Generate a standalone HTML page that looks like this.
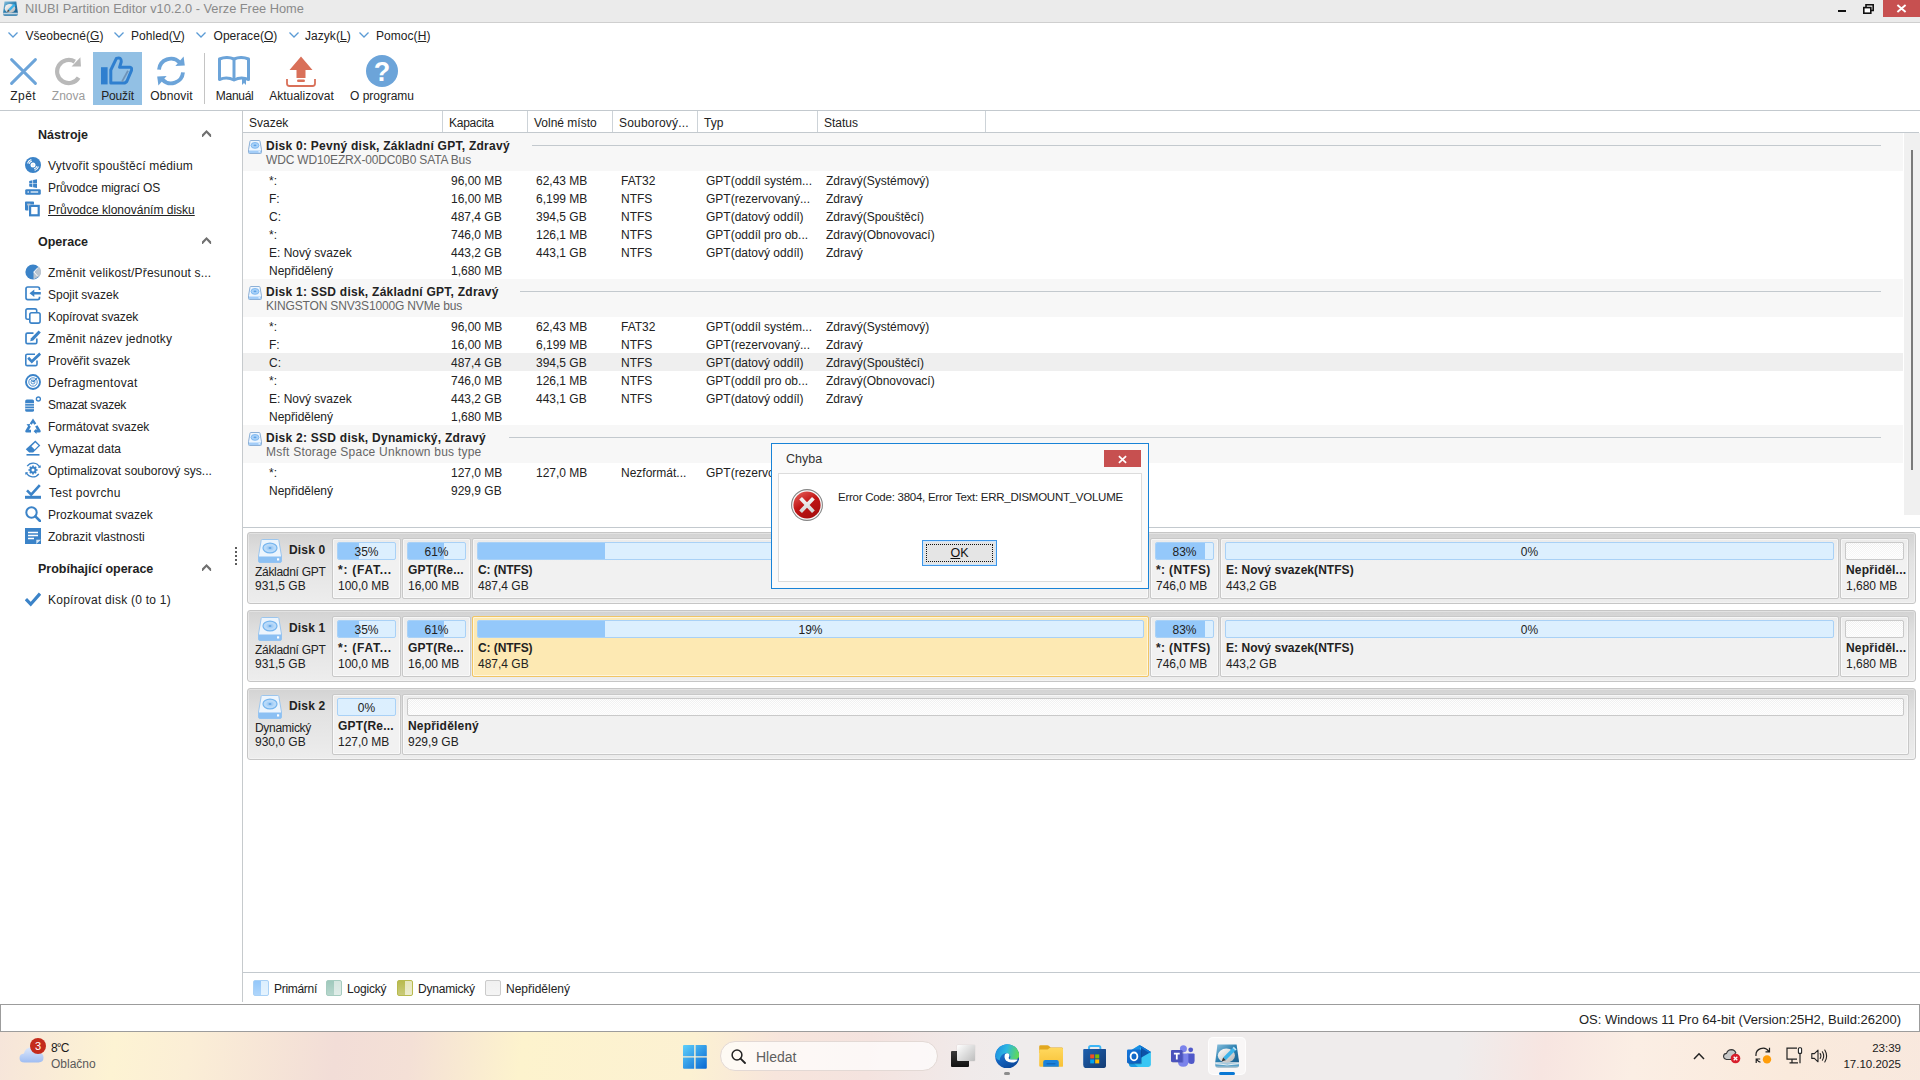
<!DOCTYPE html>
<html lang="cs"><head><meta charset="utf-8"><title>NIUBI Partition Editor v10.2.0 - Verze Free Home</title>
<style>
html,body{margin:0;padding:0}
body{width:1920px;height:1080px;overflow:hidden;position:relative;background:#fff;
 font-family:"Liberation Sans",sans-serif;font-size:12px;color:#222}
.t{position:absolute;white-space:nowrap;line-height:16px;height:16px}
.b{font-weight:bold;letter-spacing:.26px}
.g{color:#666}
.c{text-align:center}
.u{text-decoration:underline}
.hl{position:absolute;height:1px;background:#c3c9ce}
.cell{position:absolute;height:61px;top:0;background:linear-gradient(#ebebeb,#f1f1f1 40%);border:1px solid #c8c8c8;box-sizing:border-box;border-radius:2px;box-shadow:inset 0 0 0 1px rgba(255,255,255,.55)}
.bar{position:absolute;left:4px;right:4px;top:3px;height:18px;box-sizing:border-box;border:1px solid #a9d1f6;background:#dceffe;border-radius:2px;overflow:hidden}
.bar i{position:absolute;left:0;top:0;bottom:0;background:#94c8fa}
.bar.un{border-color:#c9c9c9;background:repeating-conic-gradient(rgba(255,255,255,.9) 0 25%,rgba(255,255,255,0) 0 50%) 0 0/2px 2px,linear-gradient(#efefef,#f8f8f8)}
.dk{position:absolute;left:247px;width:1669px;height:72px;box-sizing:border-box;border:1px solid #c6c6c6;border-radius:3px;
 background:linear-gradient(#d3d3d3,#e2e2e2 35%,#ededed);box-shadow:inset 0 0 0 1px rgba(255,255,255,.35)}
</style></head><body>

<div style="position:absolute;left:0px;top:0px;width:1920px;height:22px;background:#ebebeb"></div>
<div style="position:absolute;left:0px;top:22px;width:1920px;height:1px;background:#cfcfcf"></div>
<svg style="position:absolute;left:2.5px;top:1px" width="15" height="15.4" viewBox="0 0 24.4 24.2" ><defs><linearGradient id="a1" x1="0" y1="0" x2="1" y2="1"><stop offset="0" stop-color="#8fc4e0"/><stop offset=".5" stop-color="#2b7fb0"/><stop offset="1" stop-color="#1d5f8e"/></linearGradient><linearGradient id="a2" x1="0" y1="0" x2="1" y2="1"><stop offset="0" stop-color="#ffffff"/><stop offset="1" stop-color="#b4b4b4"/></linearGradient></defs><path d="M2.4 0.4H21.6L24.2 18.6H0.2Z" fill="url(#a1)"/><path d="M0.2 18.4H24.2V20.8Q24.2 24 21 24H3.4Q0.2 24 0.2 20.8Z" fill="#4d8fb8"/><path d="M0.4 19.4H24V21H0.4Z" fill="#dfe6ea"/><ellipse cx="11.4" cy="11.6" rx="8.6" ry="7" fill="url(#a2)"/><path d="M8.2 13.6L17.6 4L20.4 6.6L10.8 16.2Z" fill="#3cb3ea"/><path d="M8.2 13.6L10.8 16.2L6.6 17.4Z" fill="#3a3a3a"/></svg>
<span class="t" style="left:25px;top:1px;color:#8a8a8a;font-size:12.8px">NIUBI Partition Editor v10.2.0 - Verze Free Home</span>
<div style="position:absolute;left:1838px;top:10px;width:8px;height:2px;background:#111"></div>
<svg style="position:absolute;left:1863px;top:4px" width="11" height="10" viewBox="0 0 11 10" ><path d="M3 3V0.8H10.2V6.5H8" fill="none" stroke="#111" stroke-width="1.6"/><rect x="0.8" y="3.6" width="7" height="5.6" fill="#fff" stroke="#111" stroke-width="1.6"/></svg>
<div style="position:absolute;left:1883px;top:0px;width:37px;height:17px;background:#c75050"></div>
<svg style="position:absolute;left:1896px;top:3px" width="11" height="11" viewBox="0 0 11 11" ><path d="M1.4 2L9.6 9M9.6 2L1.4 9" stroke="#fff" stroke-width="1.9"/></svg>
<svg style="position:absolute;left:8px;top:32px" width="10" height="6" viewBox="0 0 10 6" ><path d="M0.5 0.5L5 5L9.5 0.5" stroke="#5b9bd5" stroke-width="1.3" fill="none"/></svg>
<span class="t" style="left:25.5px;top:28px;letter-spacing:.05px">Všeobecné(<u>G</u>)</span>
<svg style="position:absolute;left:114px;top:32px" width="10" height="6" viewBox="0 0 10 6" ><path d="M0.5 0.5L5 5L9.5 0.5" stroke="#5b9bd5" stroke-width="1.3" fill="none"/></svg>
<span class="t" style="left:131px;top:28px;letter-spacing:.05px">Pohled(<u>V</u>)</span>
<svg style="position:absolute;left:196px;top:32px" width="10" height="6" viewBox="0 0 10 6" ><path d="M0.5 0.5L5 5L9.5 0.5" stroke="#5b9bd5" stroke-width="1.3" fill="none"/></svg>
<span class="t" style="left:213.5px;top:28px;letter-spacing:.05px">Operace(<u>O</u>)</span>
<svg style="position:absolute;left:289px;top:32px" width="10" height="6" viewBox="0 0 10 6" ><path d="M0.5 0.5L5 5L9.5 0.5" stroke="#5b9bd5" stroke-width="1.3" fill="none"/></svg>
<span class="t" style="left:305px;top:28px;letter-spacing:.05px">Jazyk(<u>L</u>)</span>
<svg style="position:absolute;left:359px;top:32px" width="10" height="6" viewBox="0 0 10 6" ><path d="M0.5 0.5L5 5L9.5 0.5" stroke="#5b9bd5" stroke-width="1.3" fill="none"/></svg>
<span class="t" style="left:376px;top:28px;letter-spacing:.05px">Pomoc(<u>H</u>)</span>
<div style="position:absolute;left:93px;top:52px;width:49px;height:53px;background:#92c0e4"></div>
<svg style="position:absolute;left:9.5px;top:57.6px" width="27" height="27" viewBox="0 0 27 27" ><path d="M1.6 1.6L25.4 25.4M25.4 1.6L1.6 25.4" stroke="#6ca4d9" stroke-width="2.9" stroke-linecap="round" fill="none"/></svg>
<svg style="position:absolute;left:54.5px;top:56.6px" width="27" height="29" viewBox="0 0 27 29" ><path d="M23.6 20.6A11.6 11.6 0 1 1 19.8 4.6" stroke="#b9b9b9" stroke-width="4.2" fill="none"/><path d="M16.6 9.6L26 9.4L25.4 0.2Z" fill="#b9b9b9"/></svg>
<svg style="position:absolute;left:101px;top:56.4px" width="32" height="29" viewBox="0 0 32 29" ><rect x="0" y="11.2" width="6.6" height="17.2" fill="#2f7fcf"/><path d="M9.8 27V14L15.4 2.4Q20.6 0.6 20.2 6L18.6 11.2H29Q31.4 11.6 30.4 14.6L26 25Q25 27 22.6 27Z" fill="none" stroke="#2f7fcf" stroke-width="3" stroke-linejoin="round"/><path d="M27 14.8L21 25.6" stroke="#6f93b8" stroke-width="1.8"/></svg>
<svg style="position:absolute;left:156px;top:56px" width="30" height="30" viewBox="0 0 30 30" ><g fill="none" stroke="#6ca4d9" stroke-width="3.8"><path d="M3 13.6A12 12 0 0 1 23.6 6.4"/><path d="M27 16.4A12 12 0 0 1 6.4 23.6"/></g><path d="M19.4 10L28.8 9.4L27.6 0.6Z" fill="#6ca4d9"/><path d="M10.6 20L1.2 20.6L2.4 29.4Z" fill="#6ca4d9"/></svg>
<div style="position:absolute;left:204px;top:53px;width:1px;height:51px;background:#c4c4c4"></div>
<svg style="position:absolute;left:218px;top:56px" width="32" height="29" viewBox="0 0 32 29" ><path d="M1.5 23.5V3Q9 0 16 3Q23 0 30.5 3V23.5Q23 20.5 16 24Q9 20.5 1.5 23.5Z" fill="none" stroke="#6ca4d9" stroke-width="3" stroke-linejoin="round"/><path d="M16 3V24" stroke="#6ca4d9" stroke-width="3"/><path d="M24 22V29L26 27L28 29V22Z" fill="#6ca4d9"/></svg>
<svg style="position:absolute;left:286px;top:56px" width="30" height="31" viewBox="0 0 30 31" ><path d="M15 0.5L26.5 14H19.5V22H10.5V14H3.5Z" fill="#d97059"/><rect x="11" y="23.5" width="8" height="2.6" rx="1.3" fill="#d97059"/><path d="M1 23V27.5Q1 30 3.5 30H26.5Q29 30 29 27.5V23" fill="none" stroke="#d97059" stroke-width="1.8"/></svg>
<svg style="position:absolute;left:366px;top:55px" width="32" height="32" viewBox="0 0 32 32" ><circle cx="16" cy="16" r="16" fill="#6ca4d9"/><text x="16" y="26" text-anchor="middle" font-family="Liberation Sans, sans-serif" font-weight="bold" font-size="27" fill="#fff">?</text></svg>
<span class="t c" style="left:-26.8px;top:88px;width:100px;letter-spacing:.5px;">Zpět</span>
<span class="t c" style="left:18.5px;top:88px;width:100px;color:#9b9b9b;">Znova</span>
<span class="t c" style="left:67.6px;top:88px;width:100px;letter-spacing:-.25px;">Použít</span>
<span class="t c" style="left:121.6px;top:88px;width:100px;letter-spacing:.16px;">Obnovit</span>
<span class="t c" style="left:184.6px;top:88px;width:100px;letter-spacing:-.3px;">Manuál</span>
<span class="t c" style="left:251.5px;top:88px;width:100px;">Aktualizovat</span>
<span class="t c" style="left:332px;top:88px;width:100px;">O programu</span>
<div style="position:absolute;left:0px;top:110px;width:1920px;height:1px;background:#c3c9ce"></div>
<div style="position:absolute;left:242px;top:111px;width:1px;height:891px;background:#c6cacd"></div>
<span class="t b" style="left:38px;top:127px;font-size:12.5px;letter-spacing:0">Nástroje</span>
<svg style="position:absolute;left:201.9px;top:129.7px" width="10" height="8" viewBox="0 0 10 8" ><path d="M4.5 0L9.1 4.5V7.1H8.2L4.5 3.1L0.8 7.1H0V4.5Z" fill="#707070"/></svg>
<svg style="position:absolute;left:25px;top:157px" width="16" height="16" viewBox="0 0 16 16" ><circle cx="8" cy="8" r="8" fill="#3b83c8"/><circle cx="8" cy="8" r="2.5" fill="#fff"/><circle cx="8" cy="8" r="0.9" fill="#dbe8f5"/><path d="M2.5 6.3A5.8 5.8 0 0 1 6.3 2.5M4 6.9A4.3 4.3 0 0 1 6.9 4" stroke="#fff" stroke-width="1.1" fill="none"/><path d="M13.5 9.7A5.8 5.8 0 0 1 9.7 13.5M12 9.1A4.3 4.3 0 0 1 9.1 12" stroke="#fff" stroke-width="1.1" fill="none"/></svg>
<span class="t" style="left:48px;top:158px;letter-spacing:0.19px">Vytvořit spouštěcí médium</span>
<svg style="position:absolute;left:25px;top:179px" width="16" height="16" viewBox="0 0 16 16" ><path d="M4.2 2L7.4 1.3V4.4H4.2ZM8.1 1.1L12 0.3V4.4H8.1ZM4.2 5.1H7.4V8.2L4.2 7.6ZM8.1 5.1H12V9L8.1 8.3Z" fill="#3b83c8"/><rect x="0.2" y="10.2" width="15.6" height="5.6" rx="1.4" fill="#3b83c8"/><circle cx="3.2" cy="13" r="0.8" fill="#fff"/><rect x="5.6" y="12.4" width="7.6" height="1.2" fill="#fff"/></svg>
<span class="t" style="left:48px;top:180px;letter-spacing:-0.1px">Průvodce migrací OS</span>
<svg style="position:absolute;left:25px;top:201px" width="16" height="16" viewBox="0 0 16 16" ><path d="M0 1.2Q0 0.4 0.8 0.4H8.2Q9 0.4 9 1.2V3.4H3.4V9.4H0.8Q0 9.4 0 8.6Z" fill="#3b83c8"/><rect x="5.1" y="4.9" width="8.6" height="9.4" fill="#fff" stroke="#3b83c8" stroke-width="2.2"/><rect x="2.2" y="2.6" width="3.2" height="1.8" fill="#b9c4d0"/></svg>
<span class="t u" style="left:48px;top:202px;letter-spacing:0px">Průvodce klonováním disku</span>
<span class="t b" style="left:38px;top:234px;font-size:12.5px;letter-spacing:0">Operace</span>
<svg style="position:absolute;left:201.9px;top:236.7px" width="10" height="8" viewBox="0 0 10 8" ><path d="M4.5 0L9.1 4.5V7.1H8.2L4.5 3.1L0.8 7.1H0V4.5Z" fill="#707070"/></svg>
<svg style="position:absolute;left:25px;top:264px" width="16" height="16" viewBox="0 0 16 16" ><circle cx="8" cy="8" r="7.6" fill="#3b83c8"/><path d="M8.5 8L14 2.8A7.6 7.6 0 0 1 14.6 12.2L8.5 15.5Z" fill="#b9c4d0"/><path d="M13 3.5L8.8 8L12.5 12" stroke="#fff" stroke-width="1" fill="none"/></svg>
<span class="t" style="left:48px;top:265px;letter-spacing:0.2px">Změnit velikost/Přesunout s...</span>
<svg style="position:absolute;left:25px;top:286px" width="16" height="16" viewBox="0 0 16 16" ><path d="M14.5 4V2.8Q14.5 1 12.7 1H2.8Q1 1 1 2.8V11.8Q1 13.6 2.8 13.6H12.7Q14.5 13.6 14.5 11.8V10.8" fill="none" stroke="#3b83c8" stroke-width="1.7"/><path d="M4.5 7.3L9.3 3.6V6H15.8V8.6H9.3V11Z" fill="#3b83c8"/></svg>
<span class="t" style="left:48px;top:287px;letter-spacing:0px">Spojit svazek</span>
<svg style="position:absolute;left:25px;top:308px" width="16" height="16" viewBox="0 0 16 16" ><path d="M4 11.3H2.6Q0.9 11.3 0.9 9.6V2.6Q0.9 0.9 2.6 0.9H10Q11.7 0.9 11.7 2.6V4" fill="none" stroke="#3b83c8" stroke-width="1.6"/><rect x="4.8" y="4.8" width="10.3" height="10.3" rx="1.8" fill="#fff" stroke="#3b83c8" stroke-width="1.6"/></svg>
<span class="t" style="left:48px;top:309px;letter-spacing:-0.12px">Kopírovat svazek</span>
<svg style="position:absolute;left:25px;top:330px" width="16" height="16" viewBox="0 0 16 16" ><path d="M8.5 3.2H2.4Q1 3.2 1 4.6V12.2Q1 13.6 2.4 13.6H10.4Q11.8 13.6 11.8 12.2V8.5" fill="none" stroke="#3b83c8" stroke-width="1.7"/><path d="M13.6 0.4L15.8 2.6L8.3 10.4L5.2 11.3L6 8.2Z" fill="#3b83c8"/></svg>
<span class="t" style="left:48px;top:331px;letter-spacing:0.2px">Změnit název jednotky</span>
<svg style="position:absolute;left:25px;top:352px" width="16" height="16" viewBox="0 0 16 16" ><path d="M12 8.5V12.2Q12 13.6 10.6 13.6H2.2Q0.8 13.6 0.8 12.2V3.6Q0.8 2.2 2.2 2.2H10" fill="none" stroke="#3b83c8" stroke-width="1.6"/><path d="M3.2 5.8L6.8 9.6L15.2 1.6" fill="none" stroke="#3b83c8" stroke-width="2.7"/></svg>
<span class="t" style="left:48px;top:353px;letter-spacing:0px">Prověřit svazek</span>
<svg style="position:absolute;left:25px;top:374px" width="16" height="16" viewBox="0 0 16 16" ><circle cx="8" cy="8" r="7" fill="none" stroke="#3b83c8" stroke-width="1.9"/><circle cx="8" cy="8" r="4.2" fill="none" stroke="#3b83c8" stroke-width="0.9"/><circle cx="8" cy="8" r="2" fill="none" stroke="#3b83c8" stroke-width="0.8"/><path d="M8 8L12 4.2" stroke="#3b83c8" stroke-width="1.1"/><path d="M8 8L5.5 5" stroke="#3b83c8" stroke-width="0.8"/></svg>
<span class="t" style="left:48px;top:375px;letter-spacing:0.3px">Defragmentovat</span>
<svg style="position:absolute;left:25px;top:396px" width="16" height="16" viewBox="0 0 16 16" ><rect x="0.2" y="3.4" width="8.8" height="12.4" rx="1.6" fill="#3b83c8"/><path d="M0.2 7.6H9M0.2 10.1H9M0.2 12.7H9" stroke="#fff" stroke-width="0.8"/><circle cx="13.4" cy="3" r="2" fill="none" stroke="#3b83c8" stroke-width="1.4"/></svg>
<span class="t" style="left:48px;top:397px;letter-spacing:-0.25px">Smazat svazek</span>
<svg style="position:absolute;left:25px;top:418px" width="16" height="16" viewBox="0 0 16 16" ><path d="M8 0.4L11.3 5.6L9.2 6.8L8 4.7L6.8 6.8L4.7 5.6Z" fill="#3b83c8"/><path d="M3.6 7.2L5.9 8.5L4 11.7H6V14.6H1.6Q-0.4 14.2 0.6 12.3Z" fill="#3b83c8"/><path d="M12.4 7.2L15.4 12.3Q16.4 14.2 14.4 14.6H11.5V16L8.6 13.3L11.5 10.6V11.9H12.3L10.1 8.5Z" fill="#3b83c8"/><path d="M1.5 6.2L5.2 6L4 9.2Z" fill="#3b83c8"/></svg>
<span class="t" style="left:48px;top:419px;letter-spacing:0px">Formátovat svazek</span>
<svg style="position:absolute;left:25px;top:440px" width="16" height="16" viewBox="0 0 16 16" ><path d="M10.3 0.5L15.3 5.5L8.2 12.6H4.2L0.8 9.2Z" fill="#3b83c8"/><path d="M10.3 2.4L13.5 5.5L9.6 9.4L6.4 6.3Z" fill="#fff"/><rect x="1.5" y="14" width="13" height="1.6" fill="#3b83c8"/></svg>
<span class="t" style="left:48px;top:441px;letter-spacing:0px">Vymazat data</span>
<svg style="position:absolute;left:25px;top:462px" width="16" height="16" viewBox="0 0 16 16" ><path d="M2.2 4.2A7.2 7.2 0 0 1 14.6 5.2" fill="none" stroke="#3b83c8" stroke-width="1.3"/><path d="M13.8 11.8A7.2 7.2 0 0 1 1.4 10.8" fill="none" stroke="#3b83c8" stroke-width="1.3"/><path d="M13 5.9L16 5.6L15.2 2.8Z" fill="#3b83c8"/><path d="M3 10.1L0 10.4L0.8 13.2Z" fill="#3b83c8"/><circle cx="8" cy="8" r="2.6" fill="none" stroke="#3b83c8" stroke-width="1.9"/><path d="M8 3.4V12.6M3.4 8H12.6M4.8 4.8L11.2 11.2M11.2 4.8L4.8 11.2" stroke="#3b83c8" stroke-width="1.6"/><circle cx="8" cy="8" r="1.5" fill="#fff"/></svg>
<span class="t" style="left:48px;top:463px;letter-spacing:0.04px">Optimalizovat souborový sys...</span>
<svg style="position:absolute;left:25px;top:484px" width="16" height="16" viewBox="0 0 16 16" ><path d="M2 6.4L6.2 10.6L14.8 1.2" fill="none" stroke="#3b83c8" stroke-width="2.6"/><rect x="0" y="11.8" width="16" height="3" fill="#3b83c8"/></svg>
<span class="t" style="left:49px;top:485px;letter-spacing:0.3px">Test povrchu</span>
<svg style="position:absolute;left:25px;top:506px" width="16" height="16" viewBox="0 0 16 16" ><circle cx="6.5" cy="6.5" r="5.2" fill="none" stroke="#3b83c8" stroke-width="2"/><path d="M10.4 10.4L15 15" stroke="#3b83c8" stroke-width="2.6" stroke-linecap="round"/></svg>
<span class="t" style="left:48px;top:507px;letter-spacing:0px">Prozkoumat svazek</span>
<svg style="position:absolute;left:25px;top:528px" width="16" height="16" viewBox="0 0 16 16" ><rect x="0" y="0" width="16" height="16" fill="#3b83c8"/><path d="M3 4.5H13M3 7.5H13M3 10.5H9" stroke="#fff" stroke-width="1.3"/><path d="M11.3 16V11.7H16Z" fill="#d6e6f5"/></svg>
<span class="t" style="left:48px;top:529px;letter-spacing:0px">Zobrazit vlastnosti</span>
<span class="t b" style="left:38px;top:561px;font-size:12.5px;letter-spacing:0">Probíhající operace</span>
<svg style="position:absolute;left:201.9px;top:563.7px" width="10" height="8" viewBox="0 0 10 8" ><path d="M4.5 0L9.1 4.5V7.1H8.2L4.5 3.1L0.8 7.1H0V4.5Z" fill="#707070"/></svg>
<svg style="position:absolute;left:25px;top:591px" width="16" height="16" viewBox="0 0 16 16" ><path d="M0.9 8.2L5.7 13.2L15 2.6" fill="none" stroke="#3b83c8" stroke-width="3.2"/></svg>
<span class="t" style="left:48px;top:592px;letter-spacing:.24px">Kopírovat disk (0 to 1)</span>
<div style="position:absolute;left:235px;top:547px;width:2px;height:2px;background:#5c5c5c"></div>
<div style="position:absolute;left:235px;top:551px;width:2px;height:2px;background:#5c5c5c"></div>
<div style="position:absolute;left:235px;top:555px;width:2px;height:2px;background:#5c5c5c"></div>
<div style="position:absolute;left:235px;top:559px;width:2px;height:2px;background:#5c5c5c"></div>
<div style="position:absolute;left:235px;top:563px;width:2px;height:2px;background:#5c5c5c"></div>
<span class="t" style="left:249px;top:115px;letter-spacing:0px">Svazek</span>
<span class="t" style="left:449px;top:115px;letter-spacing:-0.25px">Kapacita</span>
<span class="t" style="left:534px;top:115px;letter-spacing:0px">Volné místo</span>
<span class="t" style="left:619px;top:115px;letter-spacing:0.2px">Souborový...</span>
<span class="t" style="left:704px;top:115px;letter-spacing:0px">Typ</span>
<span class="t" style="left:824px;top:115px;letter-spacing:0px">Status</span>
<div style="position:absolute;left:442px;top:111px;width:1px;height:21px;background:#cdd3d8"></div>
<div style="position:absolute;left:527px;top:111px;width:1px;height:21px;background:#cdd3d8"></div>
<div style="position:absolute;left:612px;top:111px;width:1px;height:21px;background:#cdd3d8"></div>
<div style="position:absolute;left:697px;top:111px;width:1px;height:21px;background:#cdd3d8"></div>
<div style="position:absolute;left:817px;top:111px;width:1px;height:21px;background:#cdd3d8"></div>
<div style="position:absolute;left:985px;top:111px;width:1px;height:21px;background:#cdd3d8"></div>
<div style="position:absolute;left:243px;top:132px;width:1676px;height:1px;background:#c3c9ce"></div>
<div style="position:absolute;left:1904px;top:133px;width:16px;height:382px;background:#f0f0f0"></div>
<div style="position:absolute;left:1911px;top:150px;width:2px;height:320px;background:#7a7a7a"></div>
<div style="position:absolute;left:243px;top:133px;width:1660px;height:38px;background:#f7f7f7"></div>
<svg style="position:absolute;left:248px;top:140px" width="14" height="14" viewBox="0 0 14 14" ><path d="M2 1.2Q2.1 0.5 2.8 0.5H11.2Q11.9 0.5 12 1.2L13.5 9.8V12.5Q13.5 13.5 12.5 13.5H1.5Q0.5 13.5 0.5 12.5V9.8Z" fill="#eef6fe" stroke="#8db0d6" stroke-width="1"/><path d="M1 10.4H13V12.4Q13 13 12.4 13H1.6Q1 13 1 12.4Z" fill="#a3cdf8"/><ellipse cx="7" cy="5.4" rx="4" ry="2.9" fill="#a9d1f8" stroke="#7ab6ef" stroke-width="0.9"/><ellipse cx="7" cy="5.4" rx="1.5" ry="0.8" fill="#5fa3e6"/><rect x="10.6" y="11.2" width="1.2" height="1.2" fill="#fff"/></svg>
<span class="t b" style="left:266px;top:138px;">Disk 0: Pevný disk, Základní GPT, Zdravý</span>
<span class="t g" style="left:266px;top:152px;letter-spacing:-0.16px">WDC WD10EZRX-00DC0B0 SATA Bus</span>
<div style="position:absolute;left:532px;top:145px;width:1349px;height:1px;background:#c3c9ce"></div>
<span class="t" style="left:269px;top:173px;">*:</span>
<span class="t" style="left:451px;top:173px;">96,00 MB</span>
<span class="t" style="left:536px;top:173px;">62,43 MB</span>
<span class="t" style="left:621px;top:173px;">FAT32</span>
<span class="t" style="left:706px;top:173px;">GPT(oddíl systém...</span>
<span class="t" style="left:826px;top:173px;">Zdravý(Systémový)</span>
<span class="t" style="left:269px;top:191px;">F:</span>
<span class="t" style="left:451px;top:191px;">16,00 MB</span>
<span class="t" style="left:536px;top:191px;">6,199 MB</span>
<span class="t" style="left:621px;top:191px;">NTFS</span>
<span class="t" style="left:706px;top:191px;">GPT(rezervovaný...</span>
<span class="t" style="left:826px;top:191px;">Zdravý</span>
<span class="t" style="left:269px;top:209px;">C:</span>
<span class="t" style="left:451px;top:209px;">487,4 GB</span>
<span class="t" style="left:536px;top:209px;">394,5 GB</span>
<span class="t" style="left:621px;top:209px;">NTFS</span>
<span class="t" style="left:706px;top:209px;">GPT(datový oddíl)</span>
<span class="t" style="left:826px;top:209px;">Zdravý(Spouštěcí)</span>
<span class="t" style="left:269px;top:227px;">*:</span>
<span class="t" style="left:451px;top:227px;">746,0 MB</span>
<span class="t" style="left:536px;top:227px;">126,1 MB</span>
<span class="t" style="left:621px;top:227px;">NTFS</span>
<span class="t" style="left:706px;top:227px;">GPT(oddíl pro ob...</span>
<span class="t" style="left:826px;top:227px;">Zdravý(Obnovovací)</span>
<span class="t" style="left:269px;top:245px;">E: Nový svazek</span>
<span class="t" style="left:451px;top:245px;">443,2 GB</span>
<span class="t" style="left:536px;top:245px;">443,1 GB</span>
<span class="t" style="left:621px;top:245px;">NTFS</span>
<span class="t" style="left:706px;top:245px;">GPT(datový oddíl)</span>
<span class="t" style="left:826px;top:245px;">Zdravý</span>
<span class="t" style="left:269px;top:263px;">Nepřidělený</span>
<span class="t" style="left:451px;top:263px;">1,680 MB</span>
<div style="position:absolute;left:243px;top:279px;width:1660px;height:38px;background:#f7f7f7"></div>
<svg style="position:absolute;left:248px;top:286px" width="14" height="14" viewBox="0 0 14 14" ><path d="M2 1.2Q2.1 0.5 2.8 0.5H11.2Q11.9 0.5 12 1.2L13.5 9.8V12.5Q13.5 13.5 12.5 13.5H1.5Q0.5 13.5 0.5 12.5V9.8Z" fill="#eef6fe" stroke="#8db0d6" stroke-width="1"/><path d="M1 10.4H13V12.4Q13 13 12.4 13H1.6Q1 13 1 12.4Z" fill="#a3cdf8"/><ellipse cx="7" cy="5.4" rx="4" ry="2.9" fill="#a9d1f8" stroke="#7ab6ef" stroke-width="0.9"/><ellipse cx="7" cy="5.4" rx="1.5" ry="0.8" fill="#5fa3e6"/><rect x="10.6" y="11.2" width="1.2" height="1.2" fill="#fff"/></svg>
<span class="t b" style="left:266px;top:284px;">Disk 1: SSD disk, Základní GPT, Zdravý</span>
<span class="t g" style="left:266px;top:298px;letter-spacing:-0.16px">KINGSTON SNV3S1000G NVMe bus</span>
<div style="position:absolute;left:520px;top:291px;width:1361px;height:1px;background:#c3c9ce"></div>
<span class="t" style="left:269px;top:319px;">*:</span>
<span class="t" style="left:451px;top:319px;">96,00 MB</span>
<span class="t" style="left:536px;top:319px;">62,43 MB</span>
<span class="t" style="left:621px;top:319px;">FAT32</span>
<span class="t" style="left:706px;top:319px;">GPT(oddíl systém...</span>
<span class="t" style="left:826px;top:319px;">Zdravý(Systémový)</span>
<span class="t" style="left:269px;top:337px;">F:</span>
<span class="t" style="left:451px;top:337px;">16,00 MB</span>
<span class="t" style="left:536px;top:337px;">6,199 MB</span>
<span class="t" style="left:621px;top:337px;">NTFS</span>
<span class="t" style="left:706px;top:337px;">GPT(rezervovaný...</span>
<span class="t" style="left:826px;top:337px;">Zdravý</span>
<div style="position:absolute;left:243px;top:353px;width:1660px;height:18px;background:#efefef"></div>
<span class="t" style="left:269px;top:355px;">C:</span>
<span class="t" style="left:451px;top:355px;">487,4 GB</span>
<span class="t" style="left:536px;top:355px;">394,5 GB</span>
<span class="t" style="left:621px;top:355px;">NTFS</span>
<span class="t" style="left:706px;top:355px;">GPT(datový oddíl)</span>
<span class="t" style="left:826px;top:355px;">Zdravý(Spouštěcí)</span>
<span class="t" style="left:269px;top:373px;">*:</span>
<span class="t" style="left:451px;top:373px;">746,0 MB</span>
<span class="t" style="left:536px;top:373px;">126,1 MB</span>
<span class="t" style="left:621px;top:373px;">NTFS</span>
<span class="t" style="left:706px;top:373px;">GPT(oddíl pro ob...</span>
<span class="t" style="left:826px;top:373px;">Zdravý(Obnovovací)</span>
<span class="t" style="left:269px;top:391px;">E: Nový svazek</span>
<span class="t" style="left:451px;top:391px;">443,2 GB</span>
<span class="t" style="left:536px;top:391px;">443,1 GB</span>
<span class="t" style="left:621px;top:391px;">NTFS</span>
<span class="t" style="left:706px;top:391px;">GPT(datový oddíl)</span>
<span class="t" style="left:826px;top:391px;">Zdravý</span>
<span class="t" style="left:269px;top:409px;">Nepřidělený</span>
<span class="t" style="left:451px;top:409px;">1,680 MB</span>
<div style="position:absolute;left:243px;top:425px;width:1660px;height:38px;background:#f7f7f7"></div>
<svg style="position:absolute;left:248px;top:432px" width="14" height="14" viewBox="0 0 14 14" ><path d="M2 1.2Q2.1 0.5 2.8 0.5H11.2Q11.9 0.5 12 1.2L13.5 9.8V12.5Q13.5 13.5 12.5 13.5H1.5Q0.5 13.5 0.5 12.5V9.8Z" fill="#eef6fe" stroke="#8db0d6" stroke-width="1"/><path d="M1 10.4H13V12.4Q13 13 12.4 13H1.6Q1 13 1 12.4Z" fill="#a3cdf8"/><ellipse cx="7" cy="5.4" rx="4" ry="2.9" fill="#a9d1f8" stroke="#7ab6ef" stroke-width="0.9"/><ellipse cx="7" cy="5.4" rx="1.5" ry="0.8" fill="#5fa3e6"/><rect x="10.6" y="11.2" width="1.2" height="1.2" fill="#fff"/></svg>
<span class="t b" style="left:266px;top:430px;">Disk 2: SSD disk, Dynamický, Zdravý</span>
<span class="t g" style="left:266px;top:444px;letter-spacing:0.23px">Msft Storage Space Unknown bus type</span>
<div style="position:absolute;left:509px;top:437px;width:1372px;height:1px;background:#c3c9ce"></div>
<span class="t" style="left:269px;top:465px;">*:</span>
<span class="t" style="left:451px;top:465px;">127,0 MB</span>
<span class="t" style="left:536px;top:465px;">127,0 MB</span>
<span class="t" style="left:621px;top:465px;">Nezformát...</span>
<span class="t" style="left:706px;top:465px;">GPT(rezervovaný...</span>
<span class="t" style="left:269px;top:483px;">Nepřidělený</span>
<span class="t" style="left:451px;top:483px;">929,9 GB</span>
<div style="position:absolute;left:243px;top:527px;width:1677px;height:1px;background:#c3c9ce"></div>
<div class="dk" style="top:532px">
<svg style="position:absolute;left:10px;top:6px" width="24" height="24" viewBox="0 0 24 24" ><path d="M3.2 1.3Q3.4 0.5 4.2 0.5H19.8Q20.6 0.5 20.8 1.3L23.5 17V22Q23.5 23.5 22 23.5H2Q0.5 23.5 0.5 22V17Z" fill="#edf5fd" stroke="#9cc6ee" stroke-width="1"/><path d="M0.5 17.5H23.5V22Q23.5 23.5 22 23.5H2Q0.5 23.5 0.5 22Z" fill="#8cc0f3"/><ellipse cx="12" cy="9" rx="7" ry="4.8" fill="#b9daf9" stroke="#74b4ee" stroke-width="1.2"/><ellipse cx="12" cy="9" rx="3.6" ry="2.3" fill="#a5cff7"/><ellipse cx="12" cy="9" rx="1.6" ry="0.8" fill="#4f97dd"/><rect x="19" y="19.3" width="2.2" height="2.2" fill="#fff"/></svg>
<span class="t b" style="left:41px;top:9px;letter-spacing:.16px">Disk 0</span>
<span class="t" style="left:7px;top:31px;letter-spacing:-.3px">Základní GPT</span>
<span class="t" style="left:7px;top:45px">931,5 GB</span>
<div style="position:absolute;left:0;top:5px">
<div class="cell" style="left:84px;width:69px;"><div class="bar"><i style="width:21px"></i></div><span class="t c" style="left:0;right:0;top:5px">35%</span><span class="t b" style="left:5px;top:23px;letter-spacing:0.75px">*: (FAT...</span><span class="t" style="left:5px;top:39px">100,0 MB</span></div>
<div class="cell" style="left:154px;width:69px;"><div class="bar"><i style="width:36px"></i></div><span class="t c" style="left:0;right:0;top:5px">61%</span><span class="t b" style="left:5px;top:23px;letter-spacing:0.19px">GPT(Re...</span><span class="t" style="left:5px;top:39px">16,00 MB</span></div>
<div class="cell" style="left:224px;width:677px;"><div class="bar"><i style="width:127px"></i></div><span class="t c" style="left:0;right:0;top:5px">19%</span><span class="t b" style="left:5px;top:23px;letter-spacing:-0.09px">C: (NTFS)</span><span class="t" style="left:5px;top:39px">487,4 GB</span></div>
<div class="cell" style="left:902px;width:69px;"><div class="bar"><i style="width:49px"></i></div><span class="t c" style="left:0;right:0;top:5px">83%</span><span class="t b" style="left:5px;top:23px;letter-spacing:0.37px">*: (NTFS)</span><span class="t" style="left:5px;top:39px">746,0 MB</span></div>
<div class="cell" style="left:972px;width:619px;"><div class="bar"><i style="width:0px"></i></div><span class="t c" style="left:0;right:0;top:5px">0%</span><span class="t b" style="left:5px;top:23px;letter-spacing:0.05px">E: Nový svazek(NTFS)</span><span class="t" style="left:5px;top:39px">443,2 GB</span></div>
<div class="cell" style="left:1592px;width:69px;"><div class="bar un"></div><span class="t b" style="left:5px;top:23px;letter-spacing:0.2px">Nepřiděl...</span><span class="t" style="left:5px;top:39px">1,680 MB</span></div>
</div></div>
<div class="dk" style="top:610px">
<svg style="position:absolute;left:10px;top:6px" width="24" height="24" viewBox="0 0 24 24" ><path d="M3.2 1.3Q3.4 0.5 4.2 0.5H19.8Q20.6 0.5 20.8 1.3L23.5 17V22Q23.5 23.5 22 23.5H2Q0.5 23.5 0.5 22V17Z" fill="#edf5fd" stroke="#9cc6ee" stroke-width="1"/><path d="M0.5 17.5H23.5V22Q23.5 23.5 22 23.5H2Q0.5 23.5 0.5 22Z" fill="#8cc0f3"/><ellipse cx="12" cy="9" rx="7" ry="4.8" fill="#b9daf9" stroke="#74b4ee" stroke-width="1.2"/><ellipse cx="12" cy="9" rx="3.6" ry="2.3" fill="#a5cff7"/><ellipse cx="12" cy="9" rx="1.6" ry="0.8" fill="#4f97dd"/><rect x="19" y="19.3" width="2.2" height="2.2" fill="#fff"/></svg>
<span class="t b" style="left:41px;top:9px;letter-spacing:.16px">Disk 1</span>
<span class="t" style="left:7px;top:31px;letter-spacing:-.3px">Základní GPT</span>
<span class="t" style="left:7px;top:45px">931,5 GB</span>
<div style="position:absolute;left:0;top:5px">
<div class="cell" style="left:84px;width:69px;"><div class="bar"><i style="width:21px"></i></div><span class="t c" style="left:0;right:0;top:5px">35%</span><span class="t b" style="left:5px;top:23px;letter-spacing:0.75px">*: (FAT...</span><span class="t" style="left:5px;top:39px">100,0 MB</span></div>
<div class="cell" style="left:154px;width:69px;"><div class="bar"><i style="width:36px"></i></div><span class="t c" style="left:0;right:0;top:5px">61%</span><span class="t b" style="left:5px;top:23px;letter-spacing:0.19px">GPT(Re...</span><span class="t" style="left:5px;top:39px">16,00 MB</span></div>
<div class="cell" style="left:224px;width:677px;background:#fde9b3;border-color:#f1c564;"><div class="bar"><i style="width:127px"></i></div><span class="t c" style="left:0;right:0;top:5px">19%</span><span class="t b" style="left:5px;top:23px;letter-spacing:-0.09px">C: (NTFS)</span><span class="t" style="left:5px;top:39px">487,4 GB</span></div>
<div class="cell" style="left:902px;width:69px;"><div class="bar"><i style="width:49px"></i></div><span class="t c" style="left:0;right:0;top:5px">83%</span><span class="t b" style="left:5px;top:23px;letter-spacing:0.37px">*: (NTFS)</span><span class="t" style="left:5px;top:39px">746,0 MB</span></div>
<div class="cell" style="left:972px;width:619px;"><div class="bar"><i style="width:0px"></i></div><span class="t c" style="left:0;right:0;top:5px">0%</span><span class="t b" style="left:5px;top:23px;letter-spacing:0.05px">E: Nový svazek(NTFS)</span><span class="t" style="left:5px;top:39px">443,2 GB</span></div>
<div class="cell" style="left:1592px;width:69px;"><div class="bar un"></div><span class="t b" style="left:5px;top:23px;letter-spacing:0.2px">Nepřiděl...</span><span class="t" style="left:5px;top:39px">1,680 MB</span></div>
</div></div>
<div class="dk" style="top:688px">
<svg style="position:absolute;left:10px;top:6px" width="24" height="24" viewBox="0 0 24 24" ><path d="M3.2 1.3Q3.4 0.5 4.2 0.5H19.8Q20.6 0.5 20.8 1.3L23.5 17V22Q23.5 23.5 22 23.5H2Q0.5 23.5 0.5 22V17Z" fill="#edf5fd" stroke="#9cc6ee" stroke-width="1"/><path d="M0.5 17.5H23.5V22Q23.5 23.5 22 23.5H2Q0.5 23.5 0.5 22Z" fill="#8cc0f3"/><ellipse cx="12" cy="9" rx="7" ry="4.8" fill="#b9daf9" stroke="#74b4ee" stroke-width="1.2"/><ellipse cx="12" cy="9" rx="3.6" ry="2.3" fill="#a5cff7"/><ellipse cx="12" cy="9" rx="1.6" ry="0.8" fill="#4f97dd"/><rect x="19" y="19.3" width="2.2" height="2.2" fill="#fff"/></svg>
<span class="t b" style="left:41px;top:9px;letter-spacing:.16px">Disk 2</span>
<span class="t" style="left:7px;top:31px;letter-spacing:-.3px">Dynamický</span>
<span class="t" style="left:7px;top:45px">930,0 GB</span>
<div style="position:absolute;left:0;top:5px">
<div class="cell" style="left:84px;width:69px;"><div class="bar"><i style="width:0px"></i></div><span class="t c" style="left:0;right:0;top:5px">0%</span><span class="t b" style="left:5px;top:23px;letter-spacing:0.19px">GPT(Re...</span><span class="t" style="left:5px;top:39px">127,0 MB</span></div>
<div class="cell" style="left:154px;width:1507px;"><div class="bar un"></div><span class="t b" style="left:5px;top:23px;letter-spacing:0.19px">Nepřidělený</span><span class="t" style="left:5px;top:39px">929,9 GB</span></div>
</div></div>
<div style="position:absolute;left:243px;top:972px;width:1677px;height:1px;background:#c3c9ce"></div>
<div style="position:absolute;left:253px;top:980px;width:16px;height:16px;box-sizing:border-box;border:1px solid #a9d1f6;border-radius:2px;background:linear-gradient(rgba(255,255,255,0),rgba(255,255,255,.25)),linear-gradient(90deg,#94c8fa 50%,#dceffe 50%)"></div>
<span class="t" style="left:274px;top:981px;letter-spacing:-0.3px">Primární</span>
<div style="position:absolute;left:326px;top:980px;width:16px;height:16px;box-sizing:border-box;border:1px solid #a6ccc0;border-radius:2px;background:linear-gradient(rgba(255,255,255,0),rgba(255,255,255,.25)),linear-gradient(90deg,#9fc9bc 50%,#d5e6e0 50%)"></div>
<span class="t" style="left:347px;top:981px;letter-spacing:-0.2px">Logický</span>
<div style="position:absolute;left:397px;top:980px;width:16px;height:16px;box-sizing:border-box;border:1px solid #b8ba4e;border-radius:2px;background:linear-gradient(rgba(255,255,255,0),rgba(255,255,255,.25)),linear-gradient(90deg,#b8ba4e 50%,#e6e6bd 50%)"></div>
<span class="t" style="left:418px;top:981px;letter-spacing:-0.2px">Dynamický</span>
<div style="position:absolute;left:485px;top:980px;width:16px;height:16px;box-sizing:border-box;border:1px solid #cbcbcb;border-radius:2px;background:linear-gradient(rgba(255,255,255,0),rgba(255,255,255,.25)),linear-gradient(90deg,#f1f1f1 50%,#f1f1f1 50%)"></div>
<span class="t" style="left:506px;top:981px;letter-spacing:0px">Nepřidělený</span>
<div style="position:absolute;left:0px;top:1004px;width:1920px;height:28px;background:#fff;border:1px solid #9c9c9c;box-sizing:border-box"></div>
<span class="t" style="right:19px;top:1012px;font-size:13px">OS: Windows 11 Pro 64-bit (Version:25H2, Build:26200)</span>
<div style="position:absolute;left:0px;top:1032px;width:1920px;height:48px;background:linear-gradient(97deg,#f6e5da 0,#fdf3d3 115px,#fbeed6 190px,#f2ddd7 335px,#f4e0d6 410px,#fdf3cd 520px,#fcf1d2 690px,#f7e5dc 775px,#f4e3df 865px,#f0eaea 965px,#efecec 1015px,#efecec 1450px,#f7e5e1 1535px,#fbeee4 1625px,#faeadc 1780px,#f8e8de 1925px)"></div>
<svg style="position:absolute;left:19px;top:1046px" width="25" height="17" viewBox="0 0 25 17" ><defs><linearGradient id="cl" x1="0" y1="0" x2="0" y2="1"><stop offset="0" stop-color="#dfe9fb"/><stop offset="1" stop-color="#9fbdf2"/></linearGradient></defs><path d="M5.5 16.5Q0.5 16.5 0.5 12Q0.5 8 5 7.6Q6.5 1 13 1Q18.5 1 19.8 6.6Q24.5 7 24.5 11.6Q24.5 16.5 19.5 16.5Z" fill="url(#cl)"/></svg>
<div style="position:absolute;left:30px;top:1038px;width:16px;height:16px;border-radius:8px;background:#c42b1c;color:#fff;font-size:11px;line-height:16px;text-align:center">3</div>
<span class="t" style="left:51px;top:1040px;color:#1a1a1a;letter-spacing:-.8px">8°C</span>
<span class="t" style="left:51px;top:1056px;color:#5a5a5a">Oblačno</span>
<svg style="position:absolute;left:683px;top:1045px" width="24" height="24" viewBox="0 0 24 24" ><defs><linearGradient id="wn" x1="0" y1="0" x2="1" y2="1"><stop offset="0" stop-color="#5fd0fb"/><stop offset="1" stop-color="#0767d2"/></linearGradient></defs><path d="M0 1Q0 0 1 0H11.2V11.2H0ZM12.6 0H22.8Q23.8 0 23.8 1V11.2H12.6ZM0 12.6H11.2V23.8H1Q0 23.8 0 22.8ZM12.6 12.6H23.8V22.8Q23.8 23.8 22.8 23.8H12.6Z" fill="url(#wn)"/></svg>
<div style="position:absolute;left:720px;top:1041px;width:218px;height:30px;box-sizing:border-box;border-radius:15px;background:rgba(255,255,255,.72);border:1px solid #e3d9d5"></div>
<svg style="position:absolute;left:731px;top:1049px" width="15" height="15" viewBox="0 0 15 15" ><circle cx="6" cy="6" r="4.9" fill="none" stroke="#222" stroke-width="1.5"/><path d="M9.6 9.6L14 14" stroke="#222" stroke-width="1.8" stroke-linecap="round"/></svg>
<span class="t" style="left:756px;top:1049px;color:#5f5f5f;font-size:14px">Hledat</span>
<div style="position:absolute;left:951px;top:1051px;width:18px;height:16px;background:linear-gradient(#3a3a3a,#111);border-radius:1px"></div>
<div style="position:absolute;left:957px;top:1045px;width:18px;height:16px;background:linear-gradient(135deg,#fff,#bdbdbd);border-radius:1px;box-shadow:0 0 1px rgba(0,0,0,.3)"></div>
<svg style="position:absolute;left:994.6px;top:1043.8px" width="24.6" height="24.6" viewBox="0 0 24.6 24.6" ><defs><linearGradient id="e1" x1="0" y1=".3" x2="1" y2=".5"><stop offset="0" stop-color="#1f8fe0"/><stop offset=".45" stop-color="#2cb7e2"/><stop offset="1" stop-color="#62da55"/></linearGradient><linearGradient id="e2" x1=".1" y1="0" x2=".6" y2="1"><stop offset="0" stop-color="#2492e4"/><stop offset=".55" stop-color="#1565c0"/><stop offset="1" stop-color="#0a479a"/></linearGradient></defs><circle cx="12.3" cy="12.3" r="12.1" fill="url(#e2)"/><path d="M0.4 11.2Q1.4 2 11.6 0.2Q22.4 0.4 24.3 10.6Q24.6 15.4 19.6 15.6H14.4Q15.7 13.8 15.2 12Q13.8 8.6 10.4 9.2Q5.4 10 4.6 16.4Q0.6 15 0.4 11.2Z" fill="url(#e1)"/><path d="M10 10.2Q12.2 8.2 14 10Q15 12 13.6 14Q14 15.6 16 15.6H22.6Q22.2 17.6 19 18.4Q14 19.2 11.2 16.8Q8.6 13.6 10 10.2Z" fill="#fdfdfd"/></svg>
<div style="position:absolute;left:1004px;top:1072px;width:6px;height:3px;background:#8c8c8c;border-radius:1.5px"></div>
<svg style="position:absolute;left:1038.6px;top:1044.8px" width="24.4" height="22" viewBox="0 0 24.4 22" ><defs><linearGradient id="fo" x1="0" y1="0" x2="0" y2="1"><stop offset="0" stop-color="#ffd85e"/><stop offset="1" stop-color="#f8c136"/></linearGradient></defs><path d="M0.2 1.6Q0.2 0.2 1.6 0.2H8.4Q9.2 0.2 9.8 0.8L11.6 2.6H22.8Q24.2 2.6 24.2 4V8H0.2Z" fill="#e2a820"/><path d="M0.2 5.4Q0.2 4.4 1.2 4.4H8.6L10.6 3H23Q24.2 3 24.2 4.2V20.4Q24.2 21.8 22.8 21.8H1.6Q0.2 21.8 0.2 20.4Z" fill="url(#fo)"/><path d="M4.2 21.8V17Q4.2 15 6.2 15H17.8Q19.8 15 19.8 17V21.8Z" fill="#1a82db"/><rect x="7.4" y="18" width="9.2" height="1.4" rx=".7" fill="#1269bd"/></svg>
<svg style="position:absolute;left:1082.8px;top:1044.6px" width="23.4" height="23.4" viewBox="0 0 23.4 23.4" ><defs><linearGradient id="st" x1="0" y1="0" x2="1" y2="1"><stop offset="0" stop-color="#1d5fae"/><stop offset="1" stop-color="#143c73"/></linearGradient></defs><path d="M6 6.4V2.8Q6 1 7.8 1H15.6Q17.4 1 17.4 2.8V6.4" fill="none" stroke="#3eb6f6" stroke-width="1.9"/><path d="M0.2 4.9Q0.2 3.9 1.2 3.9H22.2Q23.2 3.9 23.2 4.9V19.8Q23.2 23.2 19.8 23.2H3.6Q0.2 23.2 0.2 19.8Z" fill="url(#st)"/><rect x="7.2" y="9.4" width="4" height="4" fill="#f25022"/><rect x="12.2" y="9.4" width="4" height="4" fill="#7fba00"/><rect x="7.2" y="14.4" width="4" height="4" fill="#00a4ef"/><rect x="12.2" y="14.4" width="4" height="4" fill="#ffb900"/></svg>
<svg style="position:absolute;left:1127px;top:1044.8px" width="24.2" height="22.2" viewBox="0 0 24.2 22.2" ><defs><linearGradient id="ol" x1="0" y1="0" x2="1" y2="1"><stop offset="0" stop-color="#1677dc"/><stop offset="1" stop-color="#0b59b6"/></linearGradient></defs><path d="M12.6 0L23.9 6.9V19.6Q23.9 22 21.4 22H4.6Q2.1 22 2.1 19.6V6.4Z" fill="#38c6f4"/><path d="M12.6 0L2.1 6.4V12H15Z" fill="#1b90e4"/><path d="M12.6 0L23.9 6.9L14 12.8V1Z" fill="#0c52a8"/><path d="M12.6 0L23.9 6.9L22.4 7.9L12.6 2Z" fill="#1377d4"/><path d="M2.1 14L11 22H4.6Q2.1 22 2.1 19.6Z" fill="#1a9ce3"/><rect x="1" y="5.4" width="13.8" height="13.8" rx="1.2" fill="#093f7d" opacity=".45"/><rect x="0" y="4.4" width="13.9" height="13.9" rx="1.2" fill="url(#ol)"/><ellipse cx="7" cy="11.4" rx="3.4" ry="3.9" fill="none" stroke="#fff" stroke-width="1.8"/></svg>
<svg style="position:absolute;left:1171px;top:1044.8px" width="23.8" height="22" viewBox="0 0 23.8 22" ><circle cx="19.7" cy="4.8" r="2.4" fill="#5059c9"/><path d="M16.4 8.5H22.6Q23.6 8.5 23.6 9.5V15.4Q23.6 19 20.4 19Q17.4 19 16.4 16Z" fill="#5059c9"/><circle cx="12.4" cy="3.7" r="3.5" fill="#7b83eb"/><path d="M7 9.5Q7 8.5 8 8.5H16.4Q17.4 8.5 17.4 9.5V16.4Q17.4 21.8 12.2 21.8Q7 21.8 7 16.4Z" fill="#7b83eb"/><rect x="1" y="6" width="11.4" height="11.8" rx="1" fill="#2f3690" opacity=".35"/><rect x="0" y="5.1" width="11.5" height="12" rx="1" fill="#4b53bc"/><path d="M2.9 7.8H8.7V9.5H6.7V14.6H4.9V9.5H2.9Z" fill="#fff"/></svg>
<div style="position:absolute;left:1208px;top:1037px;width:38px;height:38px;box-sizing:border-box;border-radius:5px;background:rgba(255,255,255,.6);border:1px solid rgba(255,255,255,.75)"></div>
<svg style="position:absolute;left:1214.8px;top:1043.8px" width="24.4" height="24.2" viewBox="0 0 24.4 24.2" ><defs><linearGradient id="n1" x1="0" y1="0" x2="1" y2="1"><stop offset="0" stop-color="#8fc4e0"/><stop offset=".5" stop-color="#2b7fb0"/><stop offset="1" stop-color="#1d5f8e"/></linearGradient><linearGradient id="n2" x1="0" y1="0" x2="1" y2="1"><stop offset="0" stop-color="#ffffff"/><stop offset="1" stop-color="#b4b4b4"/></linearGradient><linearGradient id="n3" x1="0" y1="0" x2="0" y2="1"><stop offset="0" stop-color="#dfe6ea"/><stop offset=".5" stop-color="#4d9dc8"/><stop offset="1" stop-color="#c4ccd2"/></linearGradient></defs><path d="M2.4 0.4H21.6L24.2 18.6H0.2Z" fill="url(#n1)"/><path d="M0.2 18.4H24.2V20.8Q24.2 24 21 24H3.4Q0.2 24 0.2 20.8Z" fill="url(#n3)"/><path d="M0.6 19.6Q12.2 22.4 23.8 19.6" fill="none" stroke="#e9eef1" stroke-width="1"/><ellipse cx="11.4" cy="11.6" rx="8.6" ry="7" fill="url(#n2)"/><path d="M8.2 13.6L17.6 4L20.4 6.6L10.8 16.2Z" fill="#3cb3ea"/><path d="M17.6 4L18.8 2.8L21.6 5.4L20.4 6.6Z" fill="#bfe6f8"/><path d="M8.2 13.6L10.8 16.2L6.6 17.4Z" fill="#3a3a3a"/></svg>
<div style="position:absolute;left:1219px;top:1072px;width:16px;height:3px;background:#0a78d4;border-radius:1.5px"></div>
<svg style="position:absolute;left:1693px;top:1052px" width="12" height="8" viewBox="0 0 12 8" ><path d="M1 7L6 1.8L11 7" stroke="#222" stroke-width="1.5" fill="none"/></svg>
<svg style="position:absolute;left:1723px;top:1049px" width="18" height="15" viewBox="0 0 18 15" ><path d="M3.5 10.5Q0.5 10 0.5 7.2Q0.8 4.6 3.5 4.4Q4.8 0.6 8.6 0.6Q11.6 0.8 12.8 3.6L8 10.5Z" fill="#c9c9c9" stroke="#3a3a3a" stroke-width="1.1"/><circle cx="12.5" cy="9.5" r="4.8" fill="#d81e2c"/><path d="M10.7 7.7L14.3 11.3M14.3 7.7L10.7 11.3" stroke="#fff" stroke-width="1.3"/></svg>
<svg style="position:absolute;left:1755px;top:1047px" width="17" height="17" viewBox="0 0 17 17" ><path d="M1 9A7 7 0 0 1 13.8 4.4M14.5 0.8V4.8H10.5" fill="none" stroke="#222" stroke-width="1.2"/><path d="M5.5 15.3A7 7 0 0 1 1.6 12.2M1.2 16V12H5.2" fill="none" stroke="#222" stroke-width="1.2"/><circle cx="12" cy="12.4" r="4.2" fill="#ff9d0a"/></svg>
<svg style="position:absolute;left:1786px;top:1047px" width="17" height="17" viewBox="0 0 17 17" ><path d="M11 1.2H1V12.2H11" fill="none" stroke="#222" stroke-width="1.2"/><path d="M3.5 15.8H12M6 12.2V15.8" stroke="#222" stroke-width="1.2" fill="none"/><rect x="12.4" y="0.8" width="3.2" height="5.6" rx="1" fill="#fff" stroke="#222" stroke-width="1.1"/><path d="M14 6.4V16.2" stroke="#222" stroke-width="1.2"/></svg>
<svg style="position:absolute;left:1811px;top:1049px" width="17" height="14" viewBox="0 0 17 14" ><path d="M0.8 4.6H3.4L7 1.2V12.8L3.4 9.4H0.8Z" fill="none" stroke="#222" stroke-width="1.1" stroke-linejoin="round"/><path d="M9.2 4.6Q10.6 7 9.2 9.4M11.4 2.8Q14 7 11.4 11.2M13.8 1Q17.4 7 13.8 13" fill="none" stroke="#222" stroke-width="1.1" stroke-linecap="round"/></svg>
<span class="t" style="right:19px;top:1040px;color:#1a1a1a;font-size:11.5px">23:39</span>
<span class="t" style="right:19px;top:1056px;color:#1a1a1a;font-size:11.5px">17.10.2025</span>
<div style="position:absolute;left:771px;top:443px;width:378px;height:146px;box-sizing:border-box;border:1px solid #1883d7;background:#fafafa">
<span class="t" style="left:14px;top:7px;font-size:12.5px;color:#333">Chyba</span>
<div style="position:absolute;left:332px;top:6px;width:37px;height:17px;background:#c75050"></div>
<svg style="position:absolute;left:346.3px;top:10.6px" width="9" height="9" viewBox="0 0 9 9" ><path d="M0.9 1.1L8.1 7.9M8.1 1.1L0.9 7.9" stroke="#fff" stroke-width="1.7"/></svg>
<div style="position:absolute;left:6px;top:29px;width:364px;height:109px;box-sizing:border-box;border:1px solid #dcdcdc;background:#fff"></div>
<svg style="position:absolute;left:19px;top:44.75px" width="32" height="32" viewBox="0 0 32 32" ><defs><linearGradient id="er" x1=".2" y1="0" x2=".8" y2="1"><stop offset="0" stop-color="#e35a55"/><stop offset=".45" stop-color="#c01414"/><stop offset="1" stop-color="#a40c0c"/></linearGradient><linearGradient id="ex" x1="0" y1="0" x2="0" y2="1"><stop offset="0" stop-color="#f4f4f4"/><stop offset="1" stop-color="#d4d6d6"/></linearGradient></defs><circle cx="16" cy="16" r="15.4" fill="#fbfbfb" stroke="#858585" stroke-width="1.1"/><circle cx="16" cy="16" r="13.6" fill="url(#er)"/><path d="M9.6 9.3L22.4 22.7M22.4 9.3L9.6 22.7" stroke="url(#ex)" stroke-width="3.8"/></svg>
<span class="t" style="left:66px;top:45px;color:#222;font-size:11.5px;letter-spacing:-.26px">Error Code: 3804, Error Text: ERR_DISMOUNT_VOLUME</span>
<div style="position:absolute;left:150px;top:96px;width:75px;height:26px;box-sizing:border-box;border:1px solid #3d96e8;background:#e5e5e5;box-shadow:inset 0 0 0 1px #cfe6fb"><div style="position:absolute;left:3px;top:3px;right:3px;bottom:3px;border:1px dotted #111"></div><span class="t c" style="left:0;right:0;top:4px;font-size:12.5px;color:#111"><u>O</u>K</span></div>
</div>
</body></html>
